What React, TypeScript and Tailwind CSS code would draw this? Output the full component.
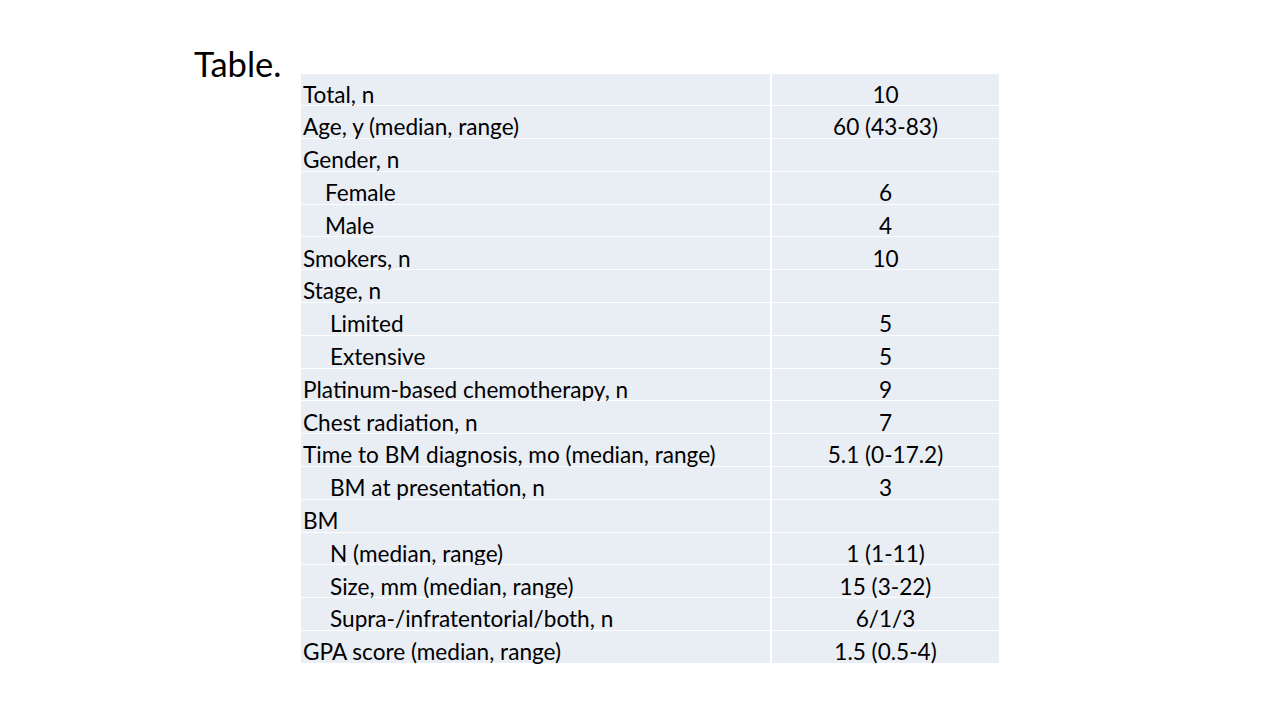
const rows: [string, string, number][] = [
  ["Total, n", "10", 0],
  ["Age, y (median, range)", "60 (43-83)", 0],
  ["Gender, n", "", 0],
  ["Female", "6", 1],
  ["Male", "4", 1],
  ["Smokers, n", "10", 0],
  ["Stage, n", "", 0],
  ["Limited", "5", 2],
  ["Extensive", "5", 2],
  ["Platinum-based chemotherapy, n", "9", 0],
  ["Chest radiation, n", "7", 0],
  ["Time to BM diagnosis, mo (median, range)", "5.1 (0-17.2)", 0],
  ["BM at presentation, n", "3", 2],
  ["BM", "", 0],
  ["N (median, range)", "1 (1-11)", 2],
  ["Size, mm (median, range)", "15 (3-22)", 2],
  ["Supra-/infratentorial/both, n", "6/1/3", 2],
  ["GPA score (median, range)", "1.5 (0.5-4)", 0],
];

export default function App() {
  return (
    <div className="h-[720px] w-[1280px] bg-white text-black" style={{ fontFamily: "Lato, 'Open Sans', sans-serif" }}>
      <div className="pl-[194px] pt-[44px] text-[34.5px] leading-[40px]">Table.</div>
      <div className="ml-[301px] mt-[-10.5px] flex w-[698px] flex-col gap-px bg-white">
        {rows.map(([label, value, indent], i) => (
          <div key={i} className="flex h-[31.8px] gap-[2px] text-[22.6px] leading-none">
            <div
              className={
                "flex w-[469px] items-center bg-[#e9edf4] pt-[11px] " +
                (indent === 1 ? "pl-[24px]" : indent === 2 ? "pl-[29px]" : "pl-[2px]")
              }
            >
              {label}
            </div>
            <div className="flex flex-1 items-center justify-center bg-[#e9edf4] pt-[11px]">{value}</div>
          </div>
        ))}
      </div>
    </div>
  );
}
